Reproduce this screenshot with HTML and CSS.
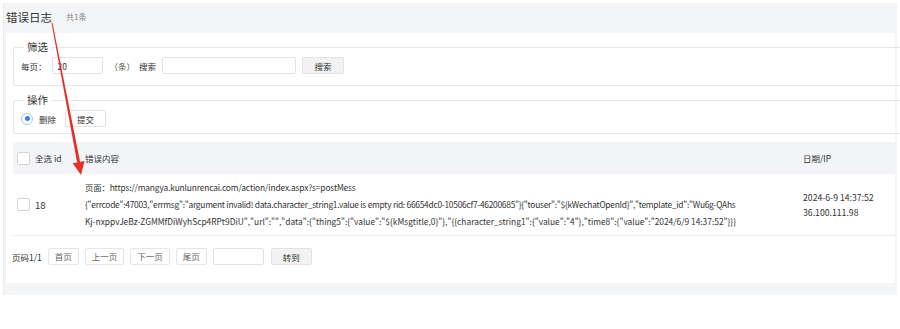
FILE: index.html
```html
<!DOCTYPE html>
<html lang="zh-CN">
<head>
    <meta charset="UTF-8">
    <title>错误日志</title>
    <link rel="stylesheet" href="styles.css">
</head>
<body>
    <div class="panel">
        <div class="panel-head">
            <h1>错误日志</h1>
            <span class="count">共1条</span>
        </div>
        <div class="panel-body">
            <fieldset class="box">
                <legend>筛选</legend>
                <div class="box-row">
                    <span class="lbl">每页：</span>
                    <input type="text" class="ipt ipt-size" value="20">
                    <span class="lbl unit">（条）</span>
                    <span class="lbl">搜索</span>
                    <input type="text" class="ipt ipt-key">
                    <button class="btn btn-gray btn-search">搜索</button>
                </div>
            </fieldset>
            <fieldset class="box box-op">
                <legend>操作</legend>
                <div class="box-row">
                    <span class="radio"><i></i></span>
                    <span class="lbl">删除</span>
                    <button class="btn btn-submit">提交</button>
                </div>
            </fieldset>

            <div class="grid grid-head">
                <div class="c-check"><span class="chk"></span>全选 id</div>
                <div>错误内容</div>
                <div>日期/IP</div>
            </div>
            <div class="grid grid-row">
                <div class="c-check"><span class="chk"></span>18</div>
                <div class="msg">
                    <div class="ln ln-url">页面：https://mangya.kunlunrencai.com/action/index.aspx?s=postMess</div>
                    <div class="ln ln-err">{"errcode":47003,"errmsg":"argument invalid! data.character_string1.value is empty rid: 66654dc0-10506cf7-46200685"}{"touser":"${kWechatOpenId}","template_id":"Wu6g-QAhs</div>
                    <div class="ln">Kj-nxppvJeBz-ZGMMfDiWyhScp4RPt9DiU","url":"","data":{"thing5":{"value":"${kMsgtitle,0}"},"{{character_string1":{"value":"4"},"time8":{"value":"2024/6/9 14:37:52"}}}</div>
                </div>
                <div class="when">2024-6-9 14:37:52<br>36.100.111.98</div>
            </div>

            <div class="pager">
                <span class="lbl">页码1/1</span>
                <a class="pg">首页</a>
                <a class="pg">上一页</a>
                <a class="pg">下一页</a>
                <a class="pg">尾页</a>
                <input type="text" class="ipt ipt-page">
                <button class="btn btn-gray btn-go">转到</button>
            </div>
        </div>
    </div>

    <!-- annotation arrow -->
    <svg class="arrow" width="900" height="329" viewBox="0 0 900 329">
        <polygon points="52.5,22.9 51.5,23.1 77.1,162.5 80.1,161.9" fill="#e5302a"/>
        <polygon points="84.5,161.1 72.7,163.3 81,175" fill="#e5302a"/>
    </svg>
</body>
</html>
```

FILE: styles.css
```css
body {
    margin: 0;
    font-family: "Noto Sans CJK SC", "Noto Sans", sans-serif;
    color: #333;
    background: #fff;
    position: relative;
    overflow: hidden;
}
.panel {
    margin: 3px 3px 0 3px;
    padding: 0 2px 12px 2px;
    background: #f4f5f7;
    border-left: 1px solid #eaebee;
}
.panel-head {
    height: 30px;
    box-sizing: border-box;
    padding: 0 0 3px 0;
    display: flex;
    align-items: center;
}
.panel-head h1 {
    margin: 0;
    font-size: 11.5px;
    font-weight: normal;
    color: #333;
}
.count {
    margin-left: 14px;
    font-size: 8px;
    color: #888;
}
.panel-body {
    background: #fff;
    padding: 7px 0 18px 7px;
}
.box {
    margin: 0 -12px 0 0;
    padding: 0 0 11px 7px;
    border: 1px solid #e6e6e6;
    border-radius: 2px;
}
.box legend {
    margin-left: 3px;
    padding: 0 3px;
    font-size: 10.5px;
    line-height: 14px;
    color: #333;
}
.box-op {
    margin-top: 7px;
    padding-bottom: 6px;
}
.box-row {
    display: flex;
    align-items: center;
    height: 17px;
    margin-top: 3px;
}
.lbl {
    font-size: 8.5px;
    color: #333;
    white-space: nowrap;
}
.unit {
    margin: 0 4px 0 7px;
    color: #555;
}
.ipt {
    box-sizing: border-box;
    height: 17px;
    border: 1px solid #e3e3e3;
    border-radius: 2px;
    font-family: inherit;
    font-size: 8.5px;
    color: #333;
    padding: 0 5px;
    outline: none;
}
.ipt-size {
    width: 51px;
    margin-left: 5px;
}
.ipt-key {
    width: 134px;
    margin-left: 6px;
}
.btn {
    box-sizing: border-box;
    height: 17px;
    border: 1px solid #e3e3e3;
    border-radius: 2px;
    background: #fff;
    font-family: inherit;
    font-size: 8.5px;
    color: #333;
    padding: 0;
    cursor: pointer;
}
.btn-gray {
    background: #f2f2f2;
}
.btn-search {
    width: 42px;
    margin-left: 6px;
}
.btn-submit {
    width: 41px;
    margin-left: 9px;
}
.radio {
    box-sizing: border-box;
    width: 12px;
    height: 12px;
    border: 1px solid #a9c5e8;
    border-radius: 50%;
    display: flex;
    align-items: center;
    justify-content: center;
    margin-right: 6px;
}
.radio i {
    width: 5px;
    height: 5px;
    border-radius: 50%;
    background: #2f86e0;
}
.grid {
    display: grid;
    grid-template-columns: 72px 718px 94px;
    font-size: 8.5px;
}
.grid-head {
    margin-top: 8px;
    height: 32px;
    align-items: center;
    background: #f2f4f7;
    color: #333;
}
.grid-row {
    height: 61px;
    align-items: center;
    border-bottom: 1px solid #ececec;
}
.c-check {
    display: flex;
    align-items: center;
    padding-left: 4px;
}
.chk {
    box-sizing: border-box;
    width: 13px;
    height: 13px;
    border: 1px solid #d4d4d4;
    border-radius: 2px;
    background: #fff;
    margin-right: 5px;
}
.grid-row .c-check {
    font-size: 9.5px;
}
.msg {
    font-size: 8.4px;
    line-height: 17px;
    white-space: nowrap;
    color: #333;
}
.ln-url {
    letter-spacing: -0.15px;
}
.ln-err {
    letter-spacing: -0.26px;
}
.when {
    font-size: 8.7px;
    line-height: 15px;
    color: #333;
}
.pager {
    display: flex;
    align-items: center;
    margin: 12px 0 0 -1px;
}
.pg {
    box-sizing: border-box;
    height: 17px;
    line-height: 15px;
    padding: 0 6px;
    border: 1px solid #e6e6e6;
    border-radius: 2px;
    font-size: 8.5px;
    color: #666;
    margin-left: 6px;
    cursor: pointer;
}
.ipt-page {
    width: 51px;
    margin-left: 6px;
}
.btn-go {
    width: 41px;
    margin-left: 7px;
}
.arrow {
    position: absolute;
    left: 0;
    top: 0;
    pointer-events: none;
}
```
